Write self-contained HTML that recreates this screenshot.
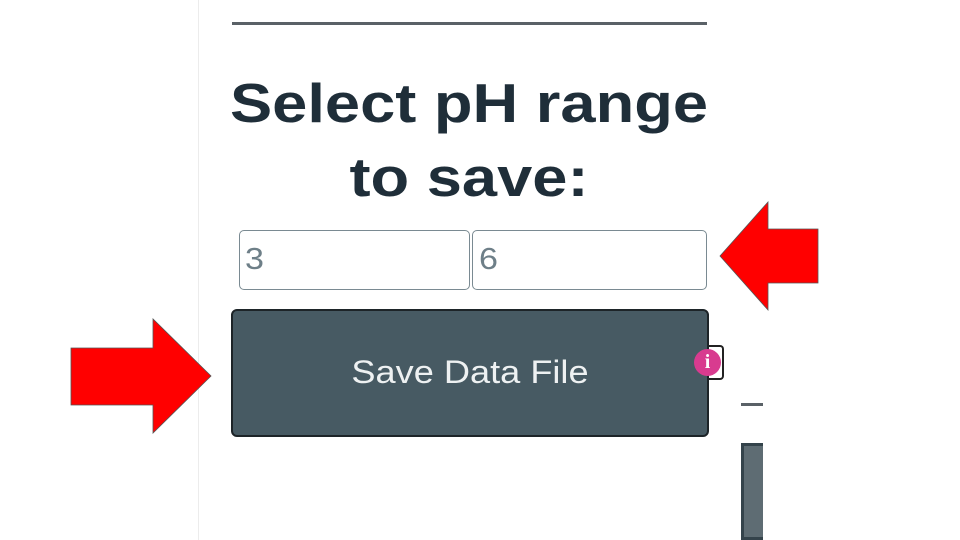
<!DOCTYPE html>
<html><head><style>
body{margin:0;width:960px;height:540px;background:#fff;position:relative;overflow:hidden;font-family:"Liberation Sans",sans-serif}
.a{position:absolute}
</style></head><body>
<div class="a" style="left:198px;top:0;width:1px;height:540px;background:#ececec"></div>
<div class="a" style="left:232px;top:22px;width:475px;height:3px;background:#5a6167"></div>
<div class="a" style="left:199px;top:66px;width:540px;text-align:center;font-weight:bold;font-size:55px;line-height:74px;color:#1f2e39;transform:scaleX(1.15);transform-origin:center top">Select pH range<br>to save:</div>
<div class="a" style="left:239px;top:230px;border:1px solid #7a8a92;border-radius:5px;box-sizing:border-box;width:231px;height:60px"></div>
<div class="a" style="left:245px;top:241px;font-size:31px;color:#6e7f88;transform:scaleX(1.1);transform-origin:0 0">3</div>
<div class="a" style="left:472px;top:230px;width:235px;height:60px;border:1px solid #7a8a92;border-radius:5px;box-sizing:border-box"></div>
<div class="a" style="left:479px;top:241px;font-size:31px;color:#6e7f88;transform:scaleX(1.1);transform-origin:0 0">6</div>
<div class="a" style="left:707px;top:345px;width:17px;height:35px;border:2px solid #222;border-left:none;border-radius:0 4px 4px 0;background:#fff;box-sizing:border-box"></div>
<div class="a" style="left:231px;top:309px;width:478px;height:128px;background:#475a63;border:2px solid #1d2428;border-radius:6px;box-sizing:border-box"></div>
<div class="a" style="left:231px;top:309px;width:478px;height:124px;color:#eef1f2;font-size:32px;line-height:126px;text-align:center;transform:scaleX(1.13);transform-origin:center top">Save Data File</div>
<div class="a" style="left:694px;top:349px;width:27px;height:27px;border-radius:50%;background:#d83b8f;color:#fff;font-weight:bold;font-size:20px;line-height:27px;text-align:center;font-family:'Liberation Serif',serif">i</div>
<div class="a" style="left:741px;top:403px;width:22px;height:3px;background:#5a6167"></div>
<div class="a" style="left:741px;top:443px;width:22px;height:97px;background:#5e6c73;border:3px solid #34434b;border-right:none;box-sizing:border-box"></div>
<svg class="a" style="left:0;top:0" width="960" height="540">
<polygon points="71,348 153,348 153,319 211,376 153,433 153,405 71,405" fill="#f00" stroke="#555" stroke-width="0.8"/>
<polygon points="720,256 768,202 768,229 818,229 818,283 768,283 768,310" fill="#f00" stroke="#555" stroke-width="0.8"/>
</svg>
</body></html>
